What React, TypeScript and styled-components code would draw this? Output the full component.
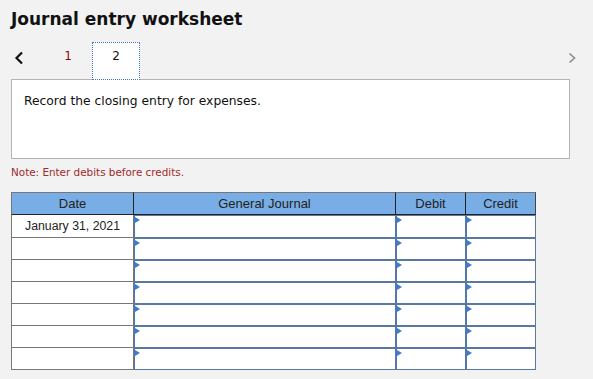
import React from "react";
import styled, { createGlobalStyle } from "styled-components";

const Global = createGlobalStyle`
  html, body { margin: 0; padding: 0; background: #f2f2f2; }
  body { font-family: "DejaVu Sans", Verdana, sans-serif; }
`;

const Page = styled.div`
  width: 593px;
  height: 379px;
  box-sizing: border-box;
  padding: 9px 0 0 11px;
  background: #f2f2f2;
  overflow: hidden;
`;

const Title = styled.h1`
  margin: 0;
  font-family: "DejaVu Sans", Verdana, sans-serif;
  font-weight: bold;
  font-size: 17px;
  line-height: 20px;
  color: #111;
`;

const TabBar = styled.div`
  display: flex;
  align-items: stretch;
  height: 38px;
  margin-top: 13px;
  width: 566px;
`;

const NavButton = styled.div<{ $right?: boolean }>`
  display: flex;
  align-items: center;
  width: 33px;
  padding-bottom: 6px;
  box-sizing: border-box;
  margin-left: ${(p) => (p.$right ? "auto" : "0")};
  justify-content: ${(p) => (p.$right ? "flex-end" : "flex-start")};
  padding-left: ${(p) => (p.$right ? "0" : "3px")};
`;

const Tab = styled.div<{ $active?: boolean }>`
  position: relative;
  z-index: 1;
  width: 48px;
  box-sizing: border-box;
  display: flex;
  justify-content: center;
  padding-top: 6px;
  font-family: "DejaVu Sans", Verdana, sans-serif;
  font-size: 12px;
  color: ${(p) => (p.$active ? "#111" : "#8b0a0a")};
  background: ${(p) => (p.$active ? "#fff" : "transparent")};
  border: ${(p) => (p.$active ? "1px dotted #3f78c8" : "1px solid transparent")};
`;

const PromptBox = styled.div`
  margin-top: -1px;
  width: 559px;
  height: 80px;
  box-sizing: border-box;
  background: #fff;
  border: 1px solid #b4b4b4;
  padding: 14px 12px;
  font-family: "DejaVu Sans", Verdana, sans-serif;
  font-size: 12.3px;
  line-height: 15px;
  color: #111;
`;

const Note = styled.div`
  margin-top: 7px;
  font-family: "DejaVu Sans", Verdana, sans-serif;
  font-size: 10.4px;
  line-height: 13px;
  color: #a02a2c;
`;

const Table = styled.div`
  margin-top: 13px;
  display: grid;
  grid-template-columns: 123px 262px 70px 70px;
  grid-template-rows: 23px 23px repeat(6, 22px);
  width: 525px;
`;

const HeadCell = styled.div<{ $first?: boolean; $last?: boolean }>`
  box-sizing: border-box;
  background: #79ade5;
  border-top: 1px solid #777;
  border-bottom: 1px solid #222;
  border-left: ${(p) => (p.$first ? "1px solid #777" : "none")};
  border-right: ${(p) => (p.$last ? "1px solid #444" : "1px solid #222")};
  display: flex;
  align-items: center;
  justify-content: center;
  font-family: "Liberation Sans", Arial, sans-serif;
  font-size: 13px;
  color: #222;
`;

const DateCell = styled.div`
  box-sizing: border-box;
  border-left: 1px solid #777;
  border-right: 1px solid #777;
  border-bottom: 1px solid #777;
  background: #fff;
  display: flex;
  align-items: center;
  justify-content: center;
  font-family: "Liberation Sans", Arial, sans-serif;
  font-size: 12.3px;
  color: #222;
`;

const InputCell = styled.div`
  position: relative;
  box-sizing: border-box;
  background: #fff;
  border: 1px solid #5a79a2;
  border-left-color: #4a78b5;
`;

const Marker = styled.span`
  position: absolute;
  left: 0;
  top: 1px;
  width: 0;
  height: 0;
  border-left: 5px solid #3d7bd0;
  border-top: 3px solid transparent;
  border-bottom: 3px solid transparent;
`;

const rows = ["January 31, 2021", "", "", "", "", "", ""];

export default function App() {
  return (
    <Page>
      <Global />
      <Title>Journal entry worksheet</Title>
      <TabBar>
        <NavButton>
          <svg width="10" height="14" viewBox="0 0 10 14">
            <path d="M8 1.5 L2.5 7 L8 12.5" fill="none" stroke="#111" strokeWidth="2.2" />
          </svg>
        </NavButton>
        <Tab>1</Tab>
        <Tab $active>2</Tab>
        <NavButton $right>
          <svg width="9" height="12" viewBox="0 0 9 12">
            <path d="M1.5 1.5 L6.5 6 L1.5 10.5" fill="none" stroke="#8a8a8a" strokeWidth="1.6" />
          </svg>
        </NavButton>
      </TabBar>
      <PromptBox>Record the closing entry for expenses.</PromptBox>
      <Note>Note: Enter debits before credits.</Note>
      <Table>
        <HeadCell $first>Date</HeadCell>
        <HeadCell>General Journal</HeadCell>
        <HeadCell>Debit</HeadCell>
        <HeadCell $last>Credit</HeadCell>
        {rows.map((d, i) => (
          <React.Fragment key={i}>
            <DateCell>{d}</DateCell>
            <InputCell><Marker /></InputCell>
            <InputCell><Marker /></InputCell>
            <InputCell><Marker /></InputCell>
          </React.Fragment>
        ))}
      </Table>
    </Page>
  );
}
